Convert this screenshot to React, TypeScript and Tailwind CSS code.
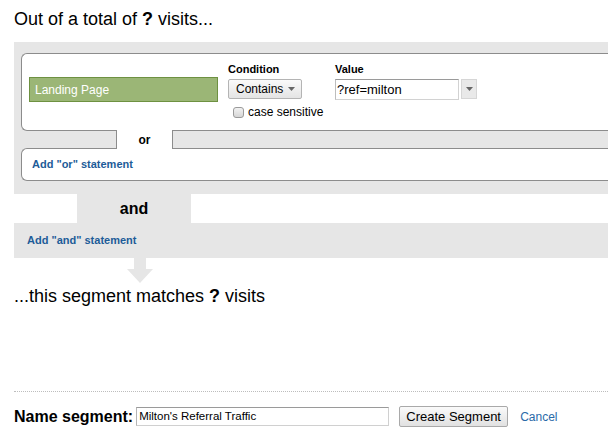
import React from "react";

function Caret({ className = "" }: { className?: string }) {
  return (
    <svg width="7" height="4" viewBox="0 0 7 4" className={className}>
      <path d="M0 0h7L3.5 4z" fill="#666" />
    </svg>
  );
}

export default function App() {
  return (
    <div className="w-[608px] h-[440px] overflow-hidden bg-white text-black font-['Liberation_Sans',Arial,sans-serif]">
      <div className="pl-[14px]">
        <h1 className="pt-[9px] text-[18px] leading-[21px]">
          Out of a total of <b>?</b> visits...
        </h1>

        <div className="mt-[12px] bg-[#e6e6e6] pl-[7px] pt-[11px] pb-[13px]">
          {/* first condition */}
          <div className="h-[78px] flex items-start bg-white border-l border-t border-b border-[#8c8c8c] rounded-l-[6px] pl-[7px] pt-[9px]">
            <div className="mt-[14px] w-[189px] h-[25px] bg-[#9bb676] border border-[#6e9141] flex items-center pl-[5px] text-white text-[12px]">
              Landing Page
            </div>
            <div className="ml-[10px] w-[107px] flex flex-col">
              <span className="text-[11px] leading-[13px] font-bold">Condition</span>
              <button className="mt-[3px] w-[74px] h-[20px] flex items-center gap-[5px] pl-[7px] text-[12px] border border-[#b4b4b4] rounded-[2px] bg-gradient-to-b from-[#fafafa] to-[#e4e4e4]">
                Contains <Caret />
              </button>
              <label className="mt-[6px] flex items-center text-[12px] leading-[14px]">
                <span className="ml-[5px] w-[11px] h-[11px] rounded-[3px] border border-[#9a9a9a] bg-gradient-to-b from-[#f2f2f2] to-[#d6d6d6]" />
                <span className="ml-[4px]">case sensitive</span>
              </label>
            </div>
            <div className="flex flex-col">
              <span className="text-[11px] leading-[13px] font-bold">Value</span>
              <div className="mt-[3px] flex items-start gap-[2px]">
                <div className="w-[124px] h-[21px] border border-[#d2d2d2] border-t-[#9a9a9a] border-l-[#bdbdbd] flex items-center pl-[1px] text-[13px]">
                  ?ref=milton
                </div>
                <div className="w-[16px] h-[20px] bg-[#e9e9e9] border border-[#d6d6d6] flex items-center justify-center">
                  <Caret />
                </div>
              </div>
            </div>
          </div>

          {/* or separator */}
          <div className="h-[17px] flex">
            <div className="w-[96px] border-r border-[#8c8c8c]" />
            <div className="relative -my-px w-[55px] bg-white flex items-center justify-center text-[12px] font-bold">
              or
            </div>
            <div className="flex-1 border-l border-[#8c8c8c]" />
          </div>

          <div className="h-[33px] flex items-center bg-white border-l border-t border-b border-[#8c8c8c] rounded-l-[6px] pl-[10px]">
            <a className="text-[11px] font-bold text-[#1d5c98]">Add "or" statement</a>
          </div>
        </div>

        <div className="ml-[63px] w-[114px] h-[29px] bg-[#e6e6e6] flex items-center justify-center text-[16px] font-bold">
          and
        </div>
        <div className="h-[35px] bg-[#e6e6e6] flex items-center pl-[13px]">
          <a className="text-[11px] font-bold text-[#1d5c98]">Add "and" statement</a>
        </div>

        <svg width="26" height="25" viewBox="0 0 26 25" className="ml-[113px] block">
          <path d="M7 0h12v11h7L13 25 0 11h7z" fill="#e6e6e6" />
        </svg>

        <p className="mt-[3px] text-[18px] leading-[21px]">
          ...this segment matches <b>?</b> visits
        </p>

        <div className="mt-[84px] border-t border-dotted border-[#bdbdbd]" />

        <div className="mt-[14px] h-[21px] flex items-center">
          <span className="text-[16px] font-bold">Name segment:</span>
          <div className="ml-[3px] w-[253px] h-[19px] border border-[#d0d0d0] border-t-[#9a9a9a] border-l-[#b5b5b5] flex items-center pl-[2px] text-[11.5px]">
            Milton's Referral Traffic
          </div>
          <button className="ml-[10px] w-[109px] h-[21px] text-[13px] border border-[#a9a9a9] rounded-[2px] bg-gradient-to-b from-[#fafafa] to-[#e1e1e1]">
            Create Segment
          </button>
          <a className="ml-[12px] text-[12px] text-[#2a6aa8]">Cancel</a>
        </div>
      </div>
    </div>
  );
}
